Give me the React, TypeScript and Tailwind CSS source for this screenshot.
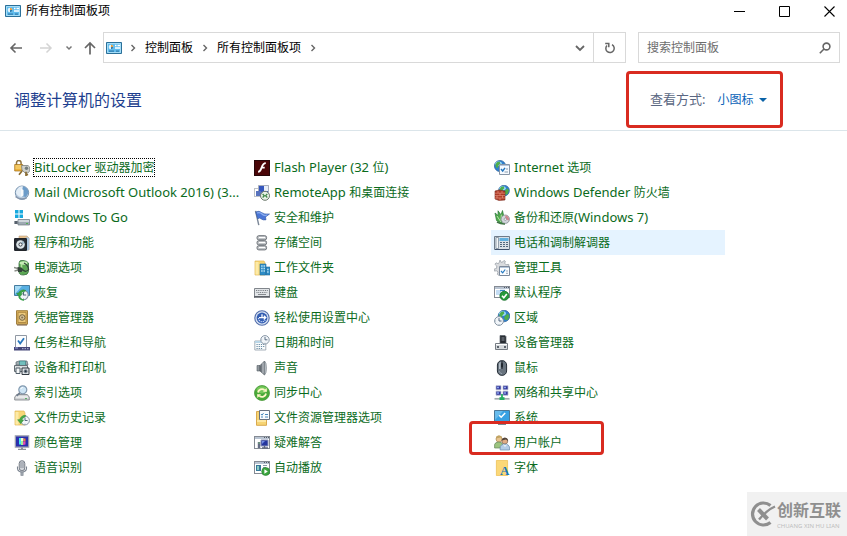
import type { ReactNode } from 'react';

function Globe({ cx, cy, r }: { cx: number; cy: number; r: number }) {
  return (
    <g transform={`translate(${cx} ${cy}) scale(${r / 6})`}>
      <circle r="6" fill="#2f7fd0" stroke="#2a5d94" strokeWidth=".7" />
      <ellipse cx="-1.5" cy="-2.5" rx="3.5" ry="2.4" fill="#9fdcf8" />
      <path d="M-5 -1 L-3.5 -4 L-.5 -4.8 L.5 -2.8 L-1.5 -.8 L-2 1.5 L-4 2 Z M1 0 L4 -2.5 L5.5 0 L4 4 L1.5 4.5 L0 2 Z" fill="#4fae4c" />
    </g>
  );
}

function Pane({ x = 0, y = 1, w = 15, h = 12 }: { x?: number; y?: number; w?: number; h?: number }) {
  return (
    <g>
      <rect x={x + 0.5} y={y + 0.5} width={w} height={h} fill="#fff" stroke="#858b94" />
      <path d={`M${x + 1} ${y + 2}h${w - 1}`} stroke="#b9c4d2" strokeWidth="2" />
      <path d={`M${x + w - 5} ${y + 1.5}h1M${x + w - 3} ${y + 1.5}h1M${x + w - 1} ${y + 1.5}h1`} stroke="#555d69" />
    </g>
  );
}

function Clock({ cx, cy, r }: { cx: number; cy: number; r: number }) {
  return (
    <g transform={`translate(${cx} ${cy}) scale(${r / 5})`} fill="none">
      <circle r="4.5" fill="#f1f5f9" stroke="#8392a1" />
      <path d="M0 -3V0H2.6" stroke="#53667d" />
      <path d="M0 3.2v.7M-3.8 0h.8" stroke="#8392a1" strokeWidth=".7" />
    </g>
  );
}

function Folder() {
  return (
    <g>
      <path d="M1 1h9l1 2v12H1z" fill="#f7d777" stroke="#dfb456" strokeWidth=".7" />
      <path d="M1.5 2h3v12.5h-3z" fill="#fdeaa7" />
    </g>
  );
}

const icons: Record<string, ReactNode> = {
  bitlocker: (
    <>
      <path d="M2.5 5V2.8a2.3 2.3 0 0 1 4.6 0V5" fill="none" stroke="#8e7440" strokeWidth="1.5" />
      <path d="M.7 4.5h8v6.500h-8z" fill="#eeb33c" stroke="#9f6e19" strokeWidth=".7" />
      <path d="M1.4 6h6.5M1.4 8h6.5" stroke="#f9dd87" />
      <path d="M7.5 5.5h6.5l1.7 1.5v4l-1.8 2h-2.8L8 10z" fill="#cdcfcc" stroke="#6f7471" strokeWidth=".7" />
      <circle cx="12.5" cy="8.3" r="1.7" fill="#717c7c" />
      <path d="M8 11l-3 3.8M12 11.8v3.5l2-1" fill="none" stroke="#8a6c32" strokeWidth="1.7" />
    </>
  ),
  flash: (
    <>
      <path d="M0 0h16v16H0z" fill="#4a0608" />
      <path d="M.5.5h15v15H.5z" fill="none" stroke="#26080b" />
      <path d="M11.8 3.2c-3 .1-3.6 2.8-4.5 5.2-.7 2-1.4 3.4-3.2 3.5M7 7.7h3.7" fill="none" stroke="#fff" strokeWidth="1.8" />
    </>
  ),
  internet: (
    <>
      <Globe cx={6} cy={6} r={5.6} />
      <path d="M5.5 4.5h10v10h-10z" fill="#f6faff" stroke="#8795a6" />
      <path d="M6 5.5h9" stroke="#b6c7dc" />
      <path d="M7 9l1.7 2L11 7.8" fill="none" stroke="#2576bd" strokeWidth="1.4" />
      <path d="M12 9h2M10.5 12H14" stroke="#8a9daf" />
    </>
  ),
  mail: (
    <>
      <circle cx="8" cy="7.7" r="6.7" fill="#bacde0" stroke="#7b96b1" />
      <path d="M3 4.500Q5.500.5 9 1.500L7 12Q2 10.500 2 7z" fill="#e4eef7" />
      <path d="M9 1.500q5 1 5.500 6l-2.500 4.500-5-1z" fill="#6d9cc9" />
      <path d="M7 3.500l2.500 1.500v5.500L7 12z" fill="#f8fafc" />
      <path d="M1.500 11.500Q6 15.500 12.500 13" fill="none" stroke="#8797ad" strokeWidth="1.6" />
    </>
  ),
  remote: (
    <>
      <path d="M.5 3.5h7v8h-7z" fill="#fff" stroke="#7d858f" strokeDasharray="1 1" />
      <path d="M4.5.5h10v9h-10z" fill="#3456bd" stroke="#a8aebb" />
      <path d="M10 1h4v5h-4z" fill="#e8eef8" />
      <path d="M2 6h5v5H2z" fill="#5772bd" />
      <circle cx="11" cy="10.8" r="4.5" fill="#e8f1e6" stroke="#6b776b" />
      <path d="M8.6 9l1.8 1.7-1.8 1.8M13.3 9l-1.7 1.7 1.7 1.8" fill="none" stroke="#3d8445" strokeWidth="1.2" />
    </>
  ),
  firewall: (
    <>
      <Globe cx={10} cy={5.6} r={5.4} />
      <path d="M1 6l4-1 6 1v9l-6 .5L1 14z" fill="#ae3c29" stroke="#792d22" strokeWidth=".6" />
      <path d="M1 8.2h10M1 10.6h10M1 13h10M4 6v2M8 6v2M6 8v2.6M3 10.6V13M8.5 10.6V13M6 13v2.5" stroke="#e6917b" strokeWidth=".7" />
    </>
  ),
  togo: (
    <>
      <path d="M1 0h3.5v3.5H1zM5.5 0H9v3.5H5.5zM1 4.5h3.5V8H1zM5.5 4.5H9V8H5.5z" fill="#18a9de" />
      <path d="M4 9.5h11.5V15H4z" fill="#9eaab3" stroke="#6e7982" strokeWidth=".7" />
      <path d="M4.5 10.2H15v1.6H4.5z" fill="#dce2e6" />
      <path d="M.4 11h3.3v3H.4z" fill="#57616d" />
      <path d="M12 13.5h2" stroke="#50b353" />
    </>
  ),
  flag: (
    <>
      <path d="M1.500 .8l3.300 14.400" stroke="#7b8797" strokeWidth="1.4" />
      <path d="M1.800 2Q5 .4 7.5 2.500T15.500 4L11.500 7l.5 2.8q-3 .7-5-1T3.800 9z" fill="#4a76d6" stroke="#2f55a5" strokeWidth=".6" />
      <path d="M3 3Q6 1.8 8 4T13 5" fill="none" stroke="#8fb1f0" strokeWidth="1.2" />
    </>
  ),
  backup: (
    <>
      <path d="M1 3l3.2 2.5L4 .8l3 4L8.500.5l2 9-3 4-5-3z" fill="#4daa49" stroke="#2d773b" strokeWidth=".7" />
      <path d="M3 6l4 6M7.3 4.5L7 10" stroke="#b9e2a9" />
      <circle cx="11.3" cy="9.2" r="4.2" fill="#d3d7dd" stroke="#7c828a" strokeWidth=".7" />
      <path d="M11.3 5.3a4 4 0 0 1 3.5 5.3l-3.5-1.4z" fill="#d18790" />
      <circle cx="11.3" cy="9.2" r="1.2" fill="#fff" stroke="#6b737e" strokeWidth=".6" />
      <path d="M3 12q4 2.2 8 2" fill="none" stroke="#427446" strokeWidth="1.7" />
    </>
  ),
  programs: (
    <>
      <path d="M5 1h8l2 2v12H5z" fill="#e9c28f" stroke="#b8a080" strokeWidth=".6" />
      <path d="M12 2l3.3 1v11.6L12 16z" fill="#a8c3dd" />
      <path d="M.6 3.6h11.8v11.8H.6z" fill="#272d35" stroke="#15191f" />
      <circle cx="6.5" cy="9.5" r="4.3" fill="#dce4e8" />
      <path d="M6.5 9.5l2-3.8 2.1 2.7z" fill="#9fb8c8" />
      <circle cx="6.5" cy="9.5" r="1.6" fill="#fff" stroke="#343c45" />
    </>
  ),
  storage: (
    <g fill="#c3c6c9" stroke="#6d7278">
      <rect x="3" y=".7" width="9.600" height="4.200" rx="1.8" />
      <rect x="3" y="5.700" width="9.600" height="4.200" rx="1.8" />
      <rect x="3" y="10.700" width="9.600" height="4.200" rx="1.8" />
      <path d="M5 2.5h6M5 7.5h6M5 12.5h6" stroke="#fff" />
    </g>
  ),
  phone: (
    <>
      <path d="M.5 1.5h15v13H.5z" fill="#dae1e7" stroke="#6f7c8a" />
      <path d="M2 2.500h2.500v11H2z" fill="#f4f7f9" stroke="#7d8d9c" strokeWidth=".8" />
      <path d="M5.5 3h9v3h-9z" fill="#62b1df" />
      <path d="M6 7.5h8M6 9.5h8M6 11.5h8" stroke="#53697d" strokeDasharray="2 1" />
      <path d="M1 14.5h14" stroke="#40526c" />
    </>
  ),
  power: (
    <>
      <path d="M5 3Q5 0 9 .4T14.500 3v8.5Q14 15 9.500 15T5 12z" fill="#5ca754" stroke="#3b7043" strokeWidth=".8" />
      <ellipse cx="9.500" cy="3" rx="4" ry="1.8" fill="#c7edb7" />
      <path d="M7.500 4v8" stroke="#b2df9e" strokeWidth="1.6" />
      <path d="M0 7.5l4 1M.5 11l3.8-1" stroke="#8b8f88" strokeWidth="1.3" />
      <path d="M3.5 7l4 .5 2 2-1.8 2.5H4z" fill="#35443b" />
      <path d="M9 10q3 3 6-1M10 3q4 2 4.5 6" fill="none" stroke="#304039" strokeWidth="1.2" />
    </>
  ),
  workfolder: (
    <>
      <Folder />
      <path d="M6 4h6v11H6zM12 7h4v8h-4z" fill="#2e8dc7" stroke="#236ca0" strokeWidth=".6" />
      <path d="M7.3 6h1.2M9.6 6h1.2M7.3 8.5h1.2M9.6 8.5h1.2M7.3 11h1.2M9.6 11h1.2M13.3 9.5h1.2M13.3 12h1.2" stroke="#d8f2fc" strokeWidth="1.3" />
    </>
  ),
  tools: (
    <>
      <path d="M6 0l1 2.4 2-.6 1-1.4 1.4 1-.8 2 1.6 1.2 2.6-.2v1.8l-2.5.7-.4 1.7L7 13l-2.2 2.3-1.5-1 .8-2.4-1.4-1L.2 11v-2l2.3-.6L2.8 6 .9 4.3l1.2-1.5 2.2 1L5.4 2z" fill="#d9dbde" stroke="#949ba3" strokeWidth=".7" />
      <path d="M5.5 6.5h10v9h-10z" fill="#fbfdff" stroke="#7c899a" />
      <path d="M6 7.5h9" stroke="#b5c6da" />
      <path d="M7 11l1.7 1.8 2.5-3.3" fill="none" stroke="#267bc2" strokeWidth="1.2" />
      <path d="M12 11h2M12 13.3h2" stroke="#99a6b3" />
    </>
  ),
  recovery: (
    <>
      <path d="M.5.5h15v10H.5z" fill="#58afe3" stroke="#467c9f" />
      <path d="M1 1h7L1 9z" fill="#a5daf5" />
      <Clock cx={9.5} cy={10} r={5.2} />
      <path d="M12 5.600A5.3 5.3 0 0 0 4.500 8l-2 .2 3 4 3.2-3.6-1.800-.2A3.5 3.5 0 0 1 10.500 6.800z" fill="#38a547" stroke="#238334" strokeWidth=".4" />
      <path d="M5 12q2 3 5 3" fill="none" stroke="#38a547" strokeWidth="1.4" />
    </>
  ),
  keyboard: (
    <>
      <path d="M.5 3.500h15v8H.5z" fill="#e2e5e8" stroke="#81868c" />
      <path d="M2 5.500h12M2.5 7.500h11" stroke="#777c82" strokeDasharray="1 .8" />
      <path d="M4 9.500h8" stroke="#85898e" />
      <path d="M0 12h16" stroke="#484d54" strokeWidth="1.3" />
    </>
  ),
  defaults: (
    <>
      <Pane w={15} h={11} />
      <path d="M2 5h5v5H2z" fill="#c4ddf4" />
      <path d="M6 5.5h5" stroke="#3989c8" strokeWidth="1.3" />
      <circle cx="10.4" cy="10.8" r="4.500" fill="#259a3b" stroke="#156f2a" strokeWidth=".8" />
      <path d="M8 10.7l1.8 2 3-3.8" fill="none" stroke="#fff" strokeWidth="1.6" />
    </>
  ),
  credential: (
    <>
      <path d="M2.5.7h11v13.5h-11z" fill="#ddb35d" stroke="#a3803f" />
      <path d="M4 2.3h8v10.2H4z" fill="#edca7c" stroke="#b08a43" />
      <circle cx="8.2" cy="7.5" r="2.8" fill="#d6c398" stroke="#77643f" />
      <circle cx="8.2" cy="7.500" r="1.100" fill="#867451" />
      <path d="M3 15h10" stroke="#72573a" />
    </>
  ),
  ease: (
    <>
      <circle cx="8" cy="8" r="7.2" fill="#d8e2f2" stroke="#526eab" strokeWidth="1.1" />
      <circle cx="8" cy="8" r="5.4" fill="#345eb2" />
      <path d="M8 8V4.3M5 7.6h6.5M9.8 5.8l2 1.8-2 1.9" fill="none" stroke="#fff" strokeWidth="1.3" />
      <path d="M4.5 8a3.6 3.6 0 0 0 6.7 2" fill="none" stroke="#c7d9fb" strokeWidth="1.2" strokeDasharray="1.3 .8" />
    </>
  ),
  region: (
    <>
      <Globe cx={10} cy={6} r={5.8} />
      <Clock cx={5} cy={11} r={4.9} />
    </>
  ),
  taskbar: (
    <>
      <path d="M1.5.5h11v12h-11z" fill="#fcfdfe" stroke="#9098a3" />
      <path d="M4 5.5l2.2 3L10 3.2" fill="none" stroke="#2776bc" strokeWidth="1.8" />
      <path d="M0 12h16v3.5H0z" fill="#454778" />
      <path d="M1 13h3" stroke="#9ba4dd" />
      <path d="M8 13.7h7" stroke="#b5badb" strokeDasharray="1.5 1" />
    </>
  ),
  date: (
    <>
      <path d="M.8 6h11v9H.8z" fill="#f9fbfc" stroke="#8f9ca7" strokeWidth=".8" />
      <path d="M1 6h10.6v2H1z" fill="#b9d6e7" />
      <path d="M2.5 9.5h8M2.5 11.5h8M2.5 13.5h6" stroke="#688ba3" strokeDasharray="1.2 1" />
      <Clock cx={11} cy={4.8} r={4.7} />
    </>
  ),
  device: (
    <>
      <path d="M6 .5h5l1 1v8H6z" fill="#292d32" stroke="#596069" strokeWidth=".7" />
      <path d="M7.5 3h3M7.5 5h3" stroke="#8b929c" />
      <path d="M1.5 8.5h12v6h-12z" fill="#d5d9dc" stroke="#767c83" />
      <path d="M3 12h2M10 12h2" stroke="#353d47" strokeWidth="1.7" />
      <path d="M2 9.5h11" stroke="#fff" />
    </>
  ),
  printer: (
    <>
      <path d="M2 2l3-1h8l1 4H2z" fill="#9faaae" stroke="#5c6970" strokeWidth=".7" />
      <path d="M5.5 1h6v5h-6z" fill="#72bfbd" stroke="#34797e" strokeWidth=".6" />
      <path d="M.5 5.5h13v6H.5z" fill="#d9dddf" stroke="#646d73" />
      <path d="M2 8h4v5.5H2z" fill="#f5f7f8" stroke="#53606b" />
      <path d="M8 8h7v6.5H8z" fill="#dfe3e6" stroke="#303941" />
      <circle cx="11.6" cy="11.2" r="2" fill="#7d8994" />
      <circle cx="11.6" cy="11.2" r="1" fill="#22303c" />
    </>
  ),
  sound: (
    <>
      <path d="M3 5.5h3V11H3z" fill="#91979d" stroke="#555e66" strokeWidth=".6" />
      <path d="M6 5.5L10.5 1v14L6 11z" fill="#747b82" stroke="#40484f" strokeWidth=".6" />
      <path d="M9 2.5v11" stroke="#ccd1d6" />
      <path d="M10.5 1q2 1 2 7t-2 7z" fill="#b9c0c5" stroke="#6b737a" strokeWidth=".5" />
    </>
  ),
  mouse: (
    <>
      <rect x="3.4" y=".6" width="9.2" height="14.8" rx="4.4" fill="#68737e" stroke="#272f38" />
      <path d="M5 4q.3-2 1.6-2.3V9H5z" fill="#b4bec7" />
      <path d="M8 1v8" stroke="#1d232b" />
      <rect x="7" y="3" width="2" height="4.500" rx="1" fill="#20272f" />
      <path d="M5 11q1 2.5 3 2.8" fill="none" stroke="#95a1ac" />
    </>
  ),
  index: (
    <>
      <path d="M2.7 9.5h10.6l2 2.6V15H.7v-2.8z" fill="#d1d3d5" stroke="#7a7e83" strokeWidth=".8" />
      <path d="M2 12h12" stroke="#fff" />
      <path d="M11 13.6h2" stroke="#51ad61" />
      <circle cx="8.8" cy="4.8" r="4" fill="#cee5f5" stroke="#8299af" strokeWidth="1.2" />
      <path d="M5.8 7.8l-3.2 3" stroke="#707c8c" strokeWidth="1.8" />
      <path d="M6.8 4q.5-1.5 2-1.6" fill="none" stroke="#fff" />
    </>
  ),
  sync: (
    <>
      <circle cx="8" cy="8" r="7.5" fill="#49a938" stroke="#4b9a3a" strokeWidth=".8" />
      <ellipse cx="8" cy="4.8" rx="5.5" ry="3.6" fill="#75c85b" />
      <path d="M4 7.5A4 4 0 0 1 10.5 5M12 8.5A4 4 0 0 1 5.5 11" fill="none" stroke="#fff6c8" strokeWidth="1.8" />
      <path d="M9 6.700h4l-.5-3.800zM7 9.300H3l.5 3.800z" fill="#fff6c8" />
    </>
  ),
  network: (
    <>
      <path d="M2 .7h5v4H2zM9 .7h5v4H9zM2 6.200h5v4H2zM9 6.200h5v4H9z" fill="#35399c" stroke="#b6bad1" strokeWidth=".7" />
      <path d="M3 1.700h2v1.5H3zM10 1.700h2v1.5h-2zM3 7.200h2v1.500H3zM10 7.200h2v1.500h-2z" fill="#8ba3ee" />
      <path d="M8 9v5" stroke="#25ad61" strokeWidth="1.8" />
      <path d="M.5 13.8h15" stroke="#a3adae" strokeWidth="1.7" />
      <path d="M5.5 12.2h5v2.8h-5z" fill="#25ad61" />
    </>
  ),
  history: (
    <>
      <Folder />
      <Clock cx={11} cy={10.5} r={4.9} />
      <path d="M12 5.5a5.3 5.3 0 0 0-6.3 4l-2.2.2 3.2 4 3-3.8H8q.4-2.1 2.7-2.7z" fill="#48a947" stroke="#278538" strokeWidth=".4" />
    </>
  ),
  explorer: (
    <>
      <path d="M2.5 1.5h9l1 2v11.8h-10z" fill="#f6d474" stroke="#d9a94e" />
      <path d="M5.5.5h10v9h-10z" fill="#f8fbfe" stroke="#657080" />
      <path d="M7 4l1 1.2 1.5-2M7 7h2M11 4.5h3M11 7h3" fill="none" stroke="#4688bd" />
      <path d="M3 11h9" stroke="#fde8a2" strokeWidth="2" />
    </>
  ),
  system: (
    <>
      <path d="M.5.5h15v11H.5z" fill="#38a1e3" stroke="#4b7898" />
      <path d="M1 1h8L1 10z" fill="#68bced" />
      <path d="M5.2 5.200l2 2 4-4.3" fill="none" stroke="#fff" strokeWidth="1.5" />
      <path d="M7 12h2v2h3v1H4v-1h3z" fill="#7b8791" />
    </>
  ),
  color: (
    <>
      <path d="M1.300.8h13.400v11.400H1.300z" fill="#2a2fae" stroke="#a0a4ae" strokeWidth="1.2" />
      <path d="M5 3h2v6.500H5z" fill="#46e7ed" />
      <path d="M7 3h2.500v3H7z" fill="#f4f5d5" />
      <path d="M9.500 3.500h2v3h-2z" fill="#f5803e" />
      <path d="M7 6h2v4H7z" fill="#9fefa0" />
      <path d="M9 6.500h2.500v3L9 10z" fill="#e14fae" />
      <path d="M7 12.500h2v1.300h3V15H4v-1.200h3z" fill="#8e929a" />
    </>
  ),
  trouble: (
    <>
      <Pane h={12} />
      <path d="M7 5h7v6H7z" fill="#25369f" stroke="#8690b7" />
      <path d="M8 6h3L8 9z" fill="#708be3" />
      <path d="M8 13h6M10.5 11v2" stroke="#5f677c" strokeWidth="1.3" />
      <path d="M3.8 7h2.5v6H3.8z" fill="#656d85" />
      <path d="M4.3 8h1.5" stroke="#75c274" />
    </>
  ),
  users: (
    <>
      <circle cx="5" cy="4" r="3" fill="#e8c48f" stroke="#a98654" strokeWidth=".7" />
      <path d="M2 3.500Q2 .5 5 .6t3.200 3L6.500 2.500z" fill="#c2a463" />
      <path d="M.6 13V9.500Q1 7.200 4.800 7q3.600.3 4.200 2.700V13z" fill="#9cc47f" stroke="#648659" strokeWidth=".7" />
      <circle cx="10.8" cy="6" r="3" fill="#e1ad83" stroke="#776153" strokeWidth=".7" />
      <path d="M7.8 5.5Q8 2.700 11 2.800t3 3.300l-2-1.500z" fill="#51453c" />
      <path d="M6.200 15v-3.300Q7 9.200 10.800 9q4.200.3 4.700 2.900V15z" fill="#b3cde6" stroke="#6c8cab" strokeWidth=".7" />
      <path d="M9.500 9.500l1.500 2 1.500-2" fill="none" stroke="#f5fbff" />
    </>
  ),
  speech: (
    <>
      <rect x="5.200" y=".7" width="5.600" height="10" rx="2.7" fill="#d3d6db" stroke="#747b85" />
      <path d="M6 3h4M6 5h4M6 7h4" stroke="#777e8a" strokeWidth=".8" />
      <path d="M3.500 6.500v2.200Q4 12 8 12t4.500-3.300V6.500" fill="none" stroke="#7b8490" strokeWidth="1.1" />
      <path d="M6.800 12h2.400v3.500H6.800z" fill="#a1a9b3" stroke="#747b85" strokeWidth=".5" />
    </>
  ),
  autoplay: (
    <>
      <Pane h={12} />
      <path d="M2 5h5v6H2z" fill="#367999" />
      <path d="M3 6h2v4H3z" fill="#8bcbc4" />
      <path d="M9 5.5h4M9 7.5h3" stroke="#8798a6" />
      <circle cx="11.7" cy="11.5" r="4" fill="#3ca63e" stroke="#238030" strokeWidth=".6" />
      <path d="M10.4 9.3l3.4 2.2-3.4 2.2z" fill="#fff" />
    </>
  ),
  font: (
    <>
      <path d="M2.400.4h11.200v15.200H2.400z" fill="#fbd878" stroke="#efc257" strokeWidth=".8" />
      <text x="6" y="15" fill="#1678ba" className="font-['Liberation_Serif',serif] text-[13px] font-bold">A</text>
    </>
  ),
};

function PanelIcon() {
  return (
    <svg viewBox="0 0 16 14" className="h-3.5 w-4 shrink-0" aria-hidden="true">
      <path d="M.5 1.5h15v11H.5z" fill="#62bcec" stroke="#2b7099" />
      <path d="M1.5 2.5h13v9h-13z" fill="none" stroke="#a6ddf7" />
      <circle cx="5" cy="6" r="2.3" fill="#e4f5fd" />
      <path d="M5 6V3.7A2.3 2.3 0 0 1 7.3 6z" fill="#ec9d3b" />
      <path d="M5 6h2.3A2.3 2.3 0 0 1 5 8.3z" fill="#2f7dad" />
      <path d="M9 4.5h1.5M11.5 4.5H14M9 7h5" stroke="#fff" strokeWidth="1.3" />
      <path d="M3 10.2h5M10 10.2h3" stroke="#2e7bad" strokeWidth="1.3" />
    </svg>
  );
}

function Chevron({ down = false }: { down?: boolean }) {
  return (
    <svg viewBox="0 0 10 10" className="h-2.5 w-2.5 shrink-0" fill="none" stroke="#666" strokeWidth={down ? 1.8 : 1.4} aria-hidden="true">
      <path d={down ? 'M1 3l4 4 4-4' : 'M3.5 2l3 3-3 3'} />
    </svg>
  );
}

// Latin letters are set one size up so they sit level with the Chinese ones
function Label({ text }: { text: string }) {
  return text.split(/([\x20-\x7e]+)/).map((part, i) =>
    i % 2 ? <span key={i} className="text-[13px] leading-4">{part}</span> : part
  );
}

const items = [
  { icon: 'bitlocker', name: 'BitLocker 驱动器加密', focused: true },
  { icon: 'flash', name: 'Flash Player (32 位)' },
  { icon: 'internet', name: 'Internet 选项' },
  { icon: 'mail', name: 'Mail (Microsoft Outlook 2016) (3...' },
  { icon: 'remote', name: 'RemoteApp 和桌面连接' },
  { icon: 'firewall', name: 'Windows Defender 防火墙' },
  { icon: 'togo', name: 'Windows To Go' },
  { icon: 'flag', name: '安全和维护' },
  { icon: 'backup', name: '备份和还原(Windows 7)' },
  { icon: 'programs', name: '程序和功能' },
  { icon: 'storage', name: '存储空间' },
  { icon: 'phone', name: '电话和调制解调器', hovered: true },
  { icon: 'power', name: '电源选项' },
  { icon: 'workfolder', name: '工作文件夹' },
  { icon: 'tools', name: '管理工具' },
  { icon: 'recovery', name: '恢复' },
  { icon: 'keyboard', name: '键盘' },
  { icon: 'defaults', name: '默认程序' },
  { icon: 'credential', name: '凭据管理器' },
  { icon: 'ease', name: '轻松使用设置中心' },
  { icon: 'region', name: '区域' },
  { icon: 'taskbar', name: '任务栏和导航' },
  { icon: 'date', name: '日期和时间' },
  { icon: 'device', name: '设备管理器' },
  { icon: 'printer', name: '设备和打印机' },
  { icon: 'sound', name: '声音' },
  { icon: 'mouse', name: '鼠标' },
  { icon: 'index', name: '索引选项' },
  { icon: 'sync', name: '同步中心' },
  { icon: 'network', name: '网络和共享中心' },
  { icon: 'history', name: '文件历史记录' },
  { icon: 'explorer', name: '文件资源管理器选项' },
  { icon: 'system', name: '系统' },
  { icon: 'color', name: '颜色管理' },
  { icon: 'trouble', name: '疑难解答' },
  { icon: 'users', name: '用户帐户', marked: true },
  { icon: 'speech', name: '语音识别' },
  { icon: 'autoplay', name: '自动播放' },
  { icon: 'font', name: '字体' },
];

function TitleBar() {
  return (
    <header className="flex h-[22px] items-center justify-between pl-[5px]">
      <div className="flex items-center gap-[5px]">
        <PanelIcon />
        <h1 className="text-xs text-black">所有控制面板项</h1>
      </div>
      <div className="flex gap-[9px]">
        <button aria-label="最小化" className="flex h-[22px] w-9 items-center justify-center">
          <svg viewBox="0 0 11 11" className="h-[11px] w-[11px]"><path d="M0 5.5h11" stroke="#000" /></svg>
        </button>
        <button aria-label="最大化" className="flex h-[22px] w-9 items-center justify-center">
          <svg viewBox="0 0 11 11" className="h-[11px] w-[11px]"><path d="M.5.5h10v10H.5z" fill="none" stroke="#000" /></svg>
        </button>
        <button aria-label="关闭" className="flex h-[22px] w-9 items-center justify-center">
          <svg viewBox="0 0 11 11" className="h-[11px] w-[11px]"><path d="M.5.5l10 10M10.5.5l-10 10" stroke="#000" strokeWidth="1.1" /></svg>
        </button>
      </div>
    </header>
  );
}

function NavBar() {
  return (
    <nav className="mt-2.5 flex h-[31px] items-center pr-[7px]">
      <div className="flex w-[103px] shrink-0 items-center pl-[9px]">
        <button aria-label="后退">
          <svg viewBox="0 0 14 14" className="h-3.5 w-3.5" fill="none" stroke="#666" strokeWidth="1.6"><path d="M13 7H2M6.5 2.5L2 7l4.5 4.5" /></svg>
        </button>
        <button aria-label="前进" className="ml-4">
          <svg viewBox="0 0 14 14" className="h-3.5 w-3.5" fill="none" stroke="#d4d4d4" strokeWidth="1.5"><path d="M1 7h11M7.5 2.5L12 7l-4.5 4.5" /></svg>
        </button>
        <button aria-label="最近浏览的位置" className="ml-3">
          <svg viewBox="0 0 8 8" className="h-2 w-2" fill="none" stroke="#777" strokeWidth="1.5"><path d="M1.5 2.5L4 5l2.5-2.5" /></svg>
        </button>
        <button aria-label="上移" className="ml-2.5">
          <svg viewBox="0 0 14 14" className="h-3.5 w-3.5" fill="none" stroke="#666" strokeWidth="1.7"><path d="M7 13.5V2M2 7l5-5 5 5" /></svg>
        </button>
      </div>
      <div className="flex h-[31px] min-w-0 flex-1 border border-[#d9d9d9]">
        <div className="flex min-w-0 flex-1 items-center pl-0.5 text-xs text-black">
          <PanelIcon />
          <span className="mr-[7px] ml-1.5"><Chevron /></span>
          <a href="#panel" className="whitespace-nowrap">控制面板</a>
          <span className="mx-[7px]"><Chevron /></span>
          <a href="#all" className="whitespace-nowrap">所有控制面板项</a>
          <span className="mx-[7px]"><Chevron /></span>
        </div>
        <button aria-label="以前的位置" className="flex w-[27px] items-center justify-center">
          <Chevron down />
        </button>
        <button aria-label="刷新" className="flex w-8 items-center justify-center border-l border-[#d9d9d9]">
          <svg viewBox="0 0 12 12" className="h-3 w-3" fill="none" stroke="#666" strokeWidth="1.5">
            <path d="M8 2.700A4.200 4.200 0 1 1 3 3.500" />
            <path d="M1.200 1.500h3.600v3.700" />
          </svg>
        </button>
      </div>
      <div className="ml-3 flex h-[31px] w-[202px] items-center border border-[#d9d9d9] px-2">
        <input aria-label="搜索控制面板" placeholder="搜索控制面板" className="min-w-0 flex-1 text-xs text-black outline-none placeholder:text-[#6d6d6d]" />
        <svg viewBox="0 0 12 12" className="h-3 w-3" fill="none" stroke="#666" strokeWidth="1.6" aria-hidden="true">
          <circle cx="7.5" cy="4.5" r="3.4" />
          <path d="M5 7L.8 11.2" />
        </svg>
      </div>
    </nav>
  );
}

function ViewBar() {
  return (
    <div className="flex h-[68px] items-center justify-between border-b border-[#dbe5ea] pt-1.5 pr-16 pl-3.5">
      <h2 className="text-base text-[#1e3f8f]">调整计算机的设置</h2>
      <div className="relative flex h-[57px] w-[157px] items-center rounded-sm border-3 border-[#d92b20] pl-[21px]">
        <label htmlFor="view" className="text-[13px] whitespace-nowrap text-[#5a6782]">查看方式:</label>
        <div className="relative ml-3 flex items-center">
          <select id="view" className="w-[50px] appearance-none text-xs text-[#0a63b8] outline-none">
            <option>小图标</option>
          </select>
          <svg viewBox="0 0 8 4" className="pointer-events-none absolute right-0 h-1 w-2" aria-hidden="true">
            <path d="M0 0h8L4 4z" fill="#0a63a8" />
          </svg>
        </div>
      </div>
    </div>
  );
}

function Watermark() {
  return (
    <div className="fixed right-0 bottom-0 flex h-11 w-[100px] items-center gap-px bg-[#f1f1f1] pl-[3px] text-[#8f8f8f]">
      <svg viewBox="0 0 26 26" className="h-[26px] w-[26px] shrink-0" fill="none" stroke="currentColor" aria-hidden="true">
        <path d="M20.5 4.5A11 11 0 1 0 20.500 21.500" strokeWidth="3.2" />
        <path d="M8.500 8.500l9 9.500" strokeWidth="4" />
        <path d="M25 5.500Q17 9 9 18.500" strokeWidth="2.4" />
      </svg>
      <div className="whitespace-nowrap">
        <div className="text-base leading-6 font-bold">创新互联</div>
        <div className="text-[6px] leading-2 text-[#bdbdbd]">CHUANG XIN HU LIAN</div>
      </div>
    </div>
  );
}

export default function App() {
  return (
    <div className="min-h-screen bg-white font-['Noto_Sans','Noto_Sans_CJK_SC',sans-serif]">
      <TitleBar />
      <NavBar />
      <ViewBar />
      <main className="pt-6 pl-[11px]">
        <ul className="grid grid-cols-[repeat(auto-fill,240px)]">
          {items.map(item => (
            <li
              key={item.icon}
              className={`relative mr-1.5 flex h-[25px] items-center gap-1 pl-[3px] ${item.hovered ? 'bg-[#e5f3ff]' : ''}`}
            >
              <svg viewBox="0 0 16 16" className="h-4 w-4 shrink-0" aria-hidden="true">{icons[item.icon]}</svg>
              <a
                href={`#${item.icon}`}
                className={`text-xs whitespace-nowrap text-[#0b6b1c] ${item.focused ? 'outline-1 outline-black outline-dotted' : ''}`}
              >
                <Label text={item.name} />
              </a>
              {item.marked && (
                <span className="pointer-events-none absolute -top-[9px] -left-[22px] h-[34px] w-[135px] rounded-sm border-3 border-[#d92b20]" />
              )}
            </li>
          ))}
        </ul>
      </main>
      <Watermark />
    </div>
  );
}
